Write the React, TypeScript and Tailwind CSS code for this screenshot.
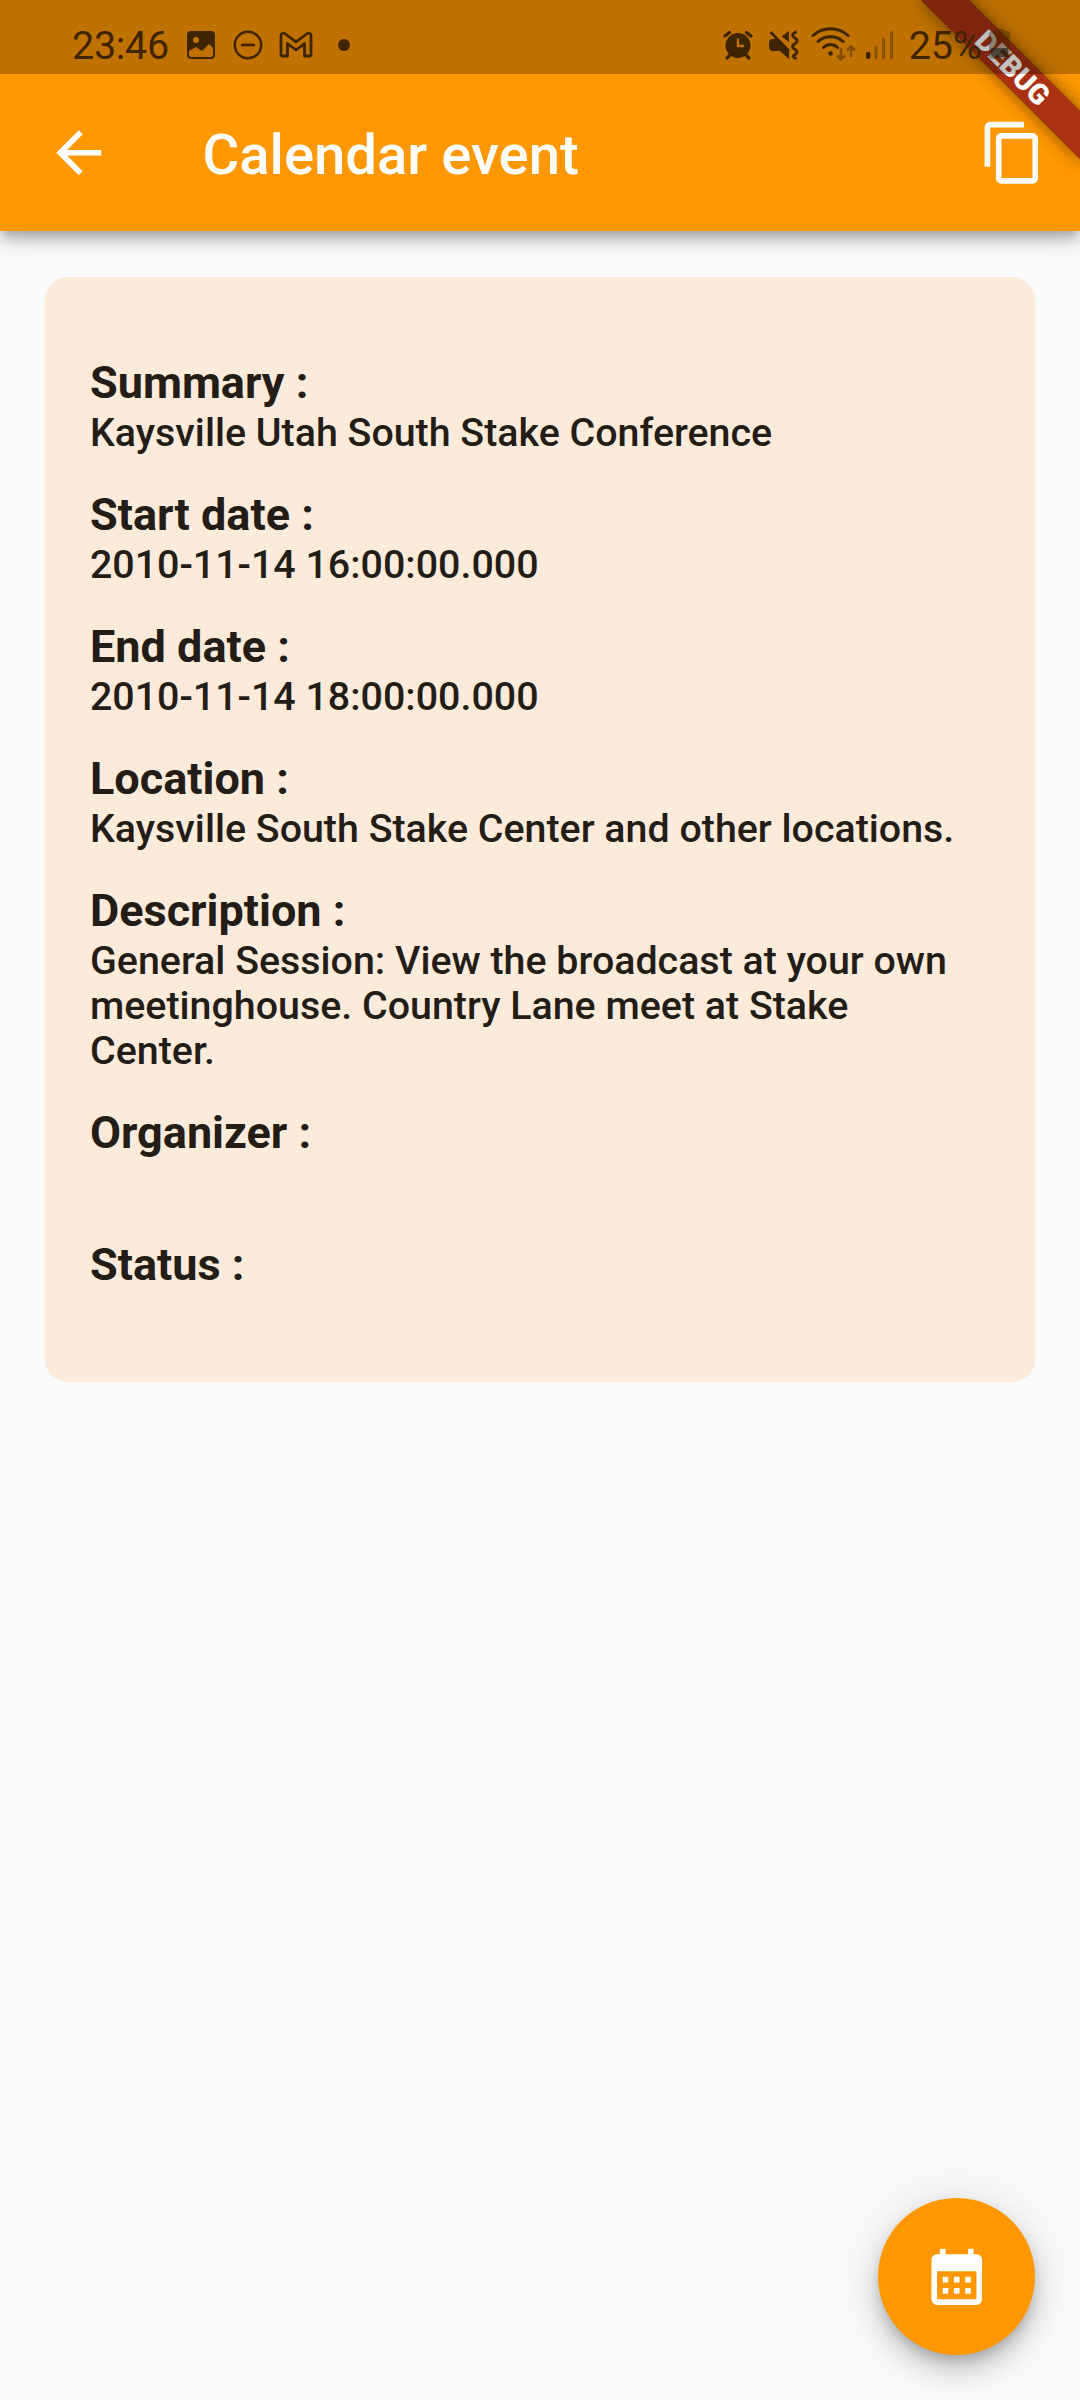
const fields = [
  { label: "Summary", value: "Kaysville Utah South Stake Conference" },
  { label: "Start date", value: "2010-11-14 16:00:00.000" },
  { label: "End date", value: "2010-11-14 18:00:00.000" },
  { label: "Location", value: "Kaysville South Stake Center and other locations." },
  {
    label: "Description",
    value:
      "General Session: View the broadcast at your own meetinghouse. Country Lane meet at Stake Center.",
  },
  { label: "Organizer", value: "" },
  { label: "Status", value: "" },
];

function StatusBar() {
  return (
    <div className="relative z-20 flex h-[74px] items-start justify-between bg-black/25 pl-[72px] pr-[70px] text-[#3f2400]">
      <div className="flex h-[74px] items-start">
        <span className="mt-[22px] w-[98px] whitespace-nowrap text-[39.500px] leading-[47px] tracking-[-0.3px]">
          23:46
        </span>
        <svg className="ml-[16px] mt-[30px] h-[30px] w-[30px]" viewBox="0 0 30 30">
          <path
            fillRule="evenodd"
            fill="currentColor"
            d="M5 1h20a4 4 0 0 1 4 4v20a4 4 0 0 1-4 4H5a4 4 0 0 1-4-4V5a4 4 0 0 1 4-4ZM10 7a3 3 0 1 0 0 6a3 3 0 0 0 0-6ZM3 21v4a2 2 0 0 0 2 2h20a2 2 0 0 0 2-2v-7l-4-4-7 7-6-4Z"
          />
        </svg>
        <svg className="ml-[17px] mt-[30px] h-[30px] w-[30px]" viewBox="0 0 30 30">
          <circle cx="15" cy="15" r="13.2" fill="none" stroke="currentColor" strokeWidth="2.4" />
          <path d="M8 15h14" stroke="currentColor" strokeWidth="2.6" />
        </svg>
        <svg className="ml-[16px] mt-[31px] h-[27px] w-[34px]" viewBox="0 0 34 27">
          <path
            fill="none"
            stroke="currentColor"
            strokeWidth="2.8"
            strokeLinejoin="round"
            d="M2 4.500v19a1.500 1.500 0 0 0 1.500 1.500H8.500V12.500l8.500 6.500 8.500-6.500V25h5a1.500 1.500 0 0 0 1.500-1.500v-19C32 2 29.500 1.500 27.500 3L17 11 6.500 3C4.500 1.500 2 2 2 4.500Z"
          />
        </svg>
        <span className="ml-[25px] mt-[39px] h-3 w-3 rounded-full bg-current" />
      </div>
      <div className="flex h-[74px] items-start">
        <svg className="mt-[30px] h-[30px] w-[30px]" viewBox="0 0 30 30">
          <circle cx="15" cy="15.500" r="12.500" fill="currentColor" />
          <path
            d="M2 6 6.500 2.500M28 6 23.500 2.500M7 25l-3 3M23 25l3 3"
            stroke="currentColor"
            strokeWidth="3.2"
            strokeLinecap="round"
          />
          <path d="M15 8.500v7.500h6" fill="none" stroke="#bf7200" strokeWidth="2.4" />
        </svg>
        <svg className="ml-[14px] mt-[30px] h-[30px] w-[32px]" viewBox="0 0 32 30">
          <path
            d="M6 9h4l12 12v8l-9-8H6a4 4 0 0 1-4-4v-4a4 4 0 0 1 4-4ZM22 1v11l-7.500-5.500Z"
            fill="currentColor"
          />
          <path d="M3.500 2 22 21" stroke="currentColor" strokeWidth="2.6" />
          <path
            d="M29.500 1.500c-5 3-5 4 -1.500 6.500s2.500 4-.5 6 -2.500 3.500.5 5.500 2.500 3.500-.5 5.500 0 2.500 2 4"
            fill="none"
            stroke="currentColor"
            strokeWidth="2.8"
          />
        </svg>
        <svg className="ml-[12px] mt-[26px] h-[36px] w-[46px]" viewBox="0 0 46 36">
          <path
            d="M2 9.500C12 .5 27 .5 37 9.500M7 15.500c7-6.500 18-6.500 25 0M12.500 21.500c4-4 10-4 14 0"
            fill="none"
            stroke="currentColor"
            strokeWidth="3"
            strokeLinecap="round"
          />
          <circle cx="19.500" cy="27.500" r="2.300" fill="currentColor" />
          <path
            d="M30 22v11M26 29.500l4 4 4-4M40 31V21M36 24.500l4-4 4 4"
            fill="none"
            stroke="currentColor"
            strokeOpacity=".45"
            strokeWidth="2.6"
          />
        </svg>
        <svg className="ml-[9px] mt-[30px] h-[30px] w-[28px]" viewBox="0 0 28 30">
          <rect y="22" width="4.500" height="7" rx="2" fill="currentColor" />
          <path
            d="M10 17v10.500M17.500 9v18.500M25.500 2.500v25"
            stroke="currentColor"
            strokeOpacity=".4"
            strokeWidth="3"
            strokeLinecap="round"
          />
        </svg>
        <span className="ml-[15px] mt-[22px] whitespace-nowrap text-[39.500px] leading-[47px]">
          25%
        </span>
        <svg className="ml-[7px] mt-[28px] h-[32px] w-[21px]" viewBox="0 0 21 32">
          <path
            d="M6 3V1h9v2h3a3 3 0 0 1 3 3v22a3 3 0 0 1-3 3H3a3 3 0 0 1-3-3V6a3 3 0 0 1 3-3Z"
            fill="currentColor"
            fillOpacity=".4"
          />
          <path d="M2 20h17v6a3 3 0 0 1-3 3H5a3 3 0 0 1-3-3Z" fill="#221c18" fillOpacity=".6" />
        </svg>
      </div>
    </div>
  );
}

function DebugBanner() {
  return (
    <div className="pointer-events-none absolute right-0 top-0 z-10 h-[240px] w-[240px] overflow-hidden">
      <div className="absolute left-[127.500px] top-[78.750px] h-[33.750px] w-[225px] origin-[112.500px_-78.750px] rotate-45 bg-black/42 shadow-[0_0_17px_rgba(0,0,0,0.5)]">
        <div className="flex h-full items-center justify-center bg-[#b71c1c]/63 text-[28.700px] font-black leading-none text-white">
          DEBUG
        </div>
      </div>
    </div>
  );
}

function AppBar() {
  return (
    <div className="flex h-[157px] items-center pl-[45px] pr-[34px] text-white">
      <svg className="h-[67.500px] w-[67.500px]" viewBox="0 0 24 24" fill="currentColor">
        <path d="M20 11H7.830l5.590-5.590L12 4l-8 8 8 8 1.410-1.410L7.830 13H20v-2z" />
      </svg>
      <h1 className="ml-[90px] flex-1 pt-[4px] text-[56.250px] font-medium leading-[66px]">
        Calendar event
      </h1>
      <svg className="h-[67.500px] w-[67.500px]" viewBox="0 0 24 24" fill="currentColor">
        <path d="M16 1H4c-1.100 0-2 .9-2 2v14h2V3h12V1zm3 4H8c-1.100 0-2 .9-2 2v14c0 1.100.9 2 2 2h11c1.100 0 2-.9 2-2V7c0-1.100-.9-2-2-2zm0 16H8V7h11v14z" />
      </svg>
    </div>
  );
}

function Field({ label, value }: { label: string; value: string }) {
  return (
    <div className="pt-[33px]">
      <div className="text-[45px] font-bold leading-[54px]">{label} :</div>
      <div className="min-h-[45px] text-[39.375px] font-medium leading-[45px]">
        {value}
      </div>
    </div>
  );
}

export default function App() {
  return (
    <div className="relative flex h-[2400px] w-[1080px] flex-col overflow-hidden bg-[#fafafa] font-['Roboto',sans-serif]">
      <header className="bg-[#ff9800] shadow-[0_6px_11px_-3px_rgba(0,0,0,0.2),0_11px_14px_rgba(0,0,0,0.14),0_3px_28px_rgba(0,0,0,0.12)]">
        <StatusBar />
        <AppBar />
      </header>
      <main className="flex flex-1 flex-col items-end justify-between px-[45px] pb-[45px] pt-[46px]">
        <section className="w-full rounded-[22.500px] bg-[#fcebdb] pb-[45px] pl-[45px] pr-[70px] pt-[46px] text-[#231c17]">
          {fields.map((field) => (
            <Field key={field.label} {...field} />
          ))}
        </section>
        <button
          type="button"
          aria-label="Add to calendar"
          className="flex h-[157.500px] w-[157.500px] items-center justify-center rounded-full bg-[#ff9800] text-white shadow-[0_8px_14px_-3px_rgba(0,0,0,0.2),0_17px_28px_rgba(0,0,0,0.14),0_3px_50px_rgba(0,0,0,0.12)]"
        >
          <svg className="h-[67.500px] w-[67.500px]" viewBox="0 0 24 24" fill="currentColor">
            <path d="M19 4h-1V2h-2v2H8V2H6v2H5c-1.110 0-1.990.9-1.990 2L3 20a2 2 0 0 0 2 2h14c1.100 0 2-.9 2-2V6c0-1.100-.9-2-2-2zm0 16H5V10h14v10zM9 14H7v-2h2v2zm4 0h-2v-2h2v2zm4 0h-2v-2h2v2zm-8 4H7v-2h2v2zm4 0h-2v-2h2v2zm4 0h-2v-2h2v2z" />
          </svg>
        </button>
      </main>
      <DebugBanner />
    </div>
  );
}
